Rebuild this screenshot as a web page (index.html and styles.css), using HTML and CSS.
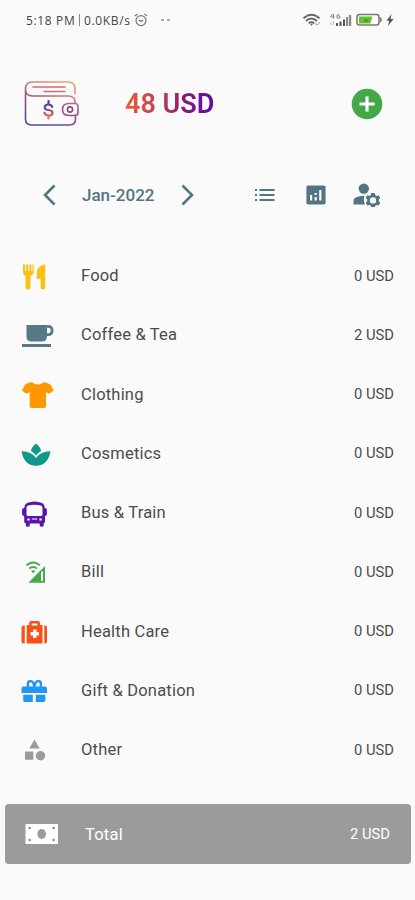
FILE: index.html
```html
<!DOCTYPE html>
<html lang="en">
<head>
<meta charset="utf-8">
<title>Expenses</title>
<link rel="stylesheet" href="styles.css">
</head>
<body>
<div class="status">
  <span class="clock">5:18 PM</span><span class="bar"></span><span class="speed">0.0KB/s</span>
  <svg class="alarm" width="14" height="14" viewBox="0 0 14 14" fill="none" stroke="#777" stroke-width="1.2"><circle cx="7" cy="7.6" r="5"/><path d="M.8 3 3.6 1M13.2 3 10.400 1M4.800 7l2.200 1.500L9.200 7"/></svg>
  <span class="dots"><i></i><i></i></span>
  <svg class="wifi" width="20" height="14" viewBox="0 0 20 14" fill="none" stroke="#666" stroke-width="1.900"><path d="M1.500 5.300Q9.500-2 17.500 5.300M4 8Q9.500 2.800 15 8M6.800 10.300Q9.500 8 12.200 10.300"/><path d="m8 11.300 1.500 1.500 1.500-1.500z" fill="#555" stroke="none"/><path d="M13 10.500l2.500 1.500 2.500-3" stroke="#999" stroke-width="1"/></svg>
  <svg class="signal" width="24" height="15" viewBox="0 0 24 15"><path d="M3.500 1 1.500 4h4M4.500 1v4.500M11 2H8v3h3V3.800H9.500" fill="none" stroke="#888"/><path d="M2 9v3M4.500 8v4" stroke="#bbb"/><path d="M7 10h2v3H7zM10.500 8.500h2V13h-2zM14 6.500h2V13h-2z" fill="#555"/><path d="M17 4h2.200v9H17zM20 2h2.200v11H20z" fill="#888"/></svg>
  <svg class="battery" width="27" height="14" viewBox="0 0 27 14"><rect x="1" y="1.500" width="22" height="10.500" rx="2.500" fill="#fff" stroke="#777" stroke-width="1.500"/><path d="M24 4.500q2 2.200 0 4.500" fill="none" stroke="#777" stroke-width="1.500"/><path d="M3 3.500h13.500l-2.200 7H3z" fill="#62c52b"/><path d="m8 9 2-3v3l2.500-3" fill="none" stroke="#438e26"/></svg>
  <svg class="bolt" width="8" height="12" viewBox="0 0 8 12"><path d="M5.500 0 .500 6.700h2.700L2 12l5.500-7H4.600z" fill="#555"/></svg>
</div>

<header class="balance">
  <svg class="wallet" width="56" height="48" viewBox="0 0 56 48" fill="none" stroke-width="1.600" stroke-linecap="round">
    <defs>
      <linearGradient id="wg" x1=".7" y1="0" x2=".3" y2="1"><stop offset="0" stop-color="#f2a07c"/><stop offset=".5" stop-color="#a8507d"/><stop offset="1" stop-color="#4a4ca3"/></linearGradient>
      <linearGradient id="dg" x1="0" y1="0" x2="0" y2="1"><stop offset=".15" stop-color="#3d469e"/><stop offset=".6" stop-color="#a75078"/><stop offset="1" stop-color="#f47b43"/></linearGradient>
    </defs>
    <path stroke="url(#wg)" d="M1.500 8v31q0 6 6 6h38q6 0 6-6v-4M51 23.500v-1.500q0-6-7-6H8.500q-7 0-7-7t7-7H44q7 0 7 7v4.500M45 23.500h6q3 0 3 3v6q0 3-3 3h-6q-6.500 0-6.500-6t6.500-6z"/>
    <path stroke="#cf6f74" d="M9 7h32M20 11.500h21"/>
    <circle cx="46" cy="29.500" r="2.600" stroke="#8b458a"/>
    <path stroke="url(#dg)" stroke-width="2.200" d="M24.500 21v3M24.500 35.500v3M28.300 27q-1-2.500-3.800-2.500-3.800 0-3.800 2.700t3.800 2.800q4 .300 4 2.900 0 2.600-4 2.600-3 0-4-2.600"/>
  </svg>
  <h1 class="amount">48 USD</h1>
  <svg class="add" width="32" height="32" viewBox="0 0 32 32"><circle cx="16" cy="16" r="15.300" fill="#43a847"/><path d="M16 8.500v15M8.500 16h15" stroke="#fff" stroke-width="3.200"/></svg>
</header>

<nav class="month">
  <svg class="prev" width="14" height="22" viewBox="0 0 14 22"><path d="M12.500 1.500 3 11l9.500 9.500"/></svg>
  <span class="month-name">Jan-2022</span>
  <svg class="next" width="14" height="22" viewBox="0 0 14 22"><path d="m1.500 1.500 9.500 9.500-9.500 9.500"/></svg>
  <svg class="tool list-icon" width="20" height="14" viewBox="0 0 20 14"><path d="M0 1h2v2H0zM4.500 1h15v2h-15zM0 6h2v2H0zM4.500 6h15v2h-15zM0 11h2v2H0zM4.500 11h15v2h-15z"/></svg>
  <svg class="tool chart-icon" width="20" height="20" viewBox="0 0 20 20"><rect x=".400" y=".400" width="19.200" height="19.200" rx="2"/><path d="M4 10h2.200v5.500H4zM8.600 12h2.200v3.500H8.600zM8.600 8h2.200v2H8.600zM13.200 5h2.200v10.500h-2.200z" fill="#fafafa"/></svg>
  <svg class="tool user-icon" width="27" height="24" viewBox="0 0 27 24"><circle cx="10.800" cy="5.600" r="5.200"/><path d="M.500 21.500V18q0-3 4-4.300 3.500-1 7-1-1.600 4.500 .500 8.800z"/><path fill-rule="evenodd" d="M18.300 10h3.400l.500 2.100 1.500.800 2-.600 1.600 2.800-1.500 1.500v1.600l1.500 1.500-1.600 2.800-2-.600-1.500.800-.500 2h-3.400l-.500-2-1.500-.800-2 .600-1.600-2.800 1.500-1.500v-1.600l-1.500-1.500 1.600-2.800 2 .600 1.500-.800zM20 14.200a3.200 3.200 0 1 0 0 6.400 3.200 3.200 0 0 0 0-6.400z"/></svg>
</nav>

<ul class="rows">
  <li class="row"><svg class="ico" viewBox="0 0 36 30" fill="#fcc010"><path d="M3 3.500h2v6.500h1.200V3.500h2v6.500h1.200V3.500h2v6.500h1V3.500h1.300V10q0 4-3.200 5v11q0 2.500-2.500 2.500T5.500 26V15Q3 14 3 10zM25.200 3.500v23q0 2-2.300 2t-2.300-2V18h-3.800v-6q0-7 8.400-8.500z"/></svg><span class="name">Food</span><span class="value">0 USD</span></li>
  <li class="row"><svg class="ico" viewBox="0 0 36 30" fill="#587988"><path fill-rule="evenodd" d="M6.500 5H28q5.500 0 5.500 5.500T28 16h-1q0 5.500-5 5.500H11.500q-5 0-5-5zM27 7.800v5.400h1q2.700 0 2.700-2.700T28 7.800z"/><path d="M2 24h29v3H2z"/></svg><span class="name">Coffee &amp; Tea</span><span class="value">2 USD</span></li>
  <li class="row"><svg class="ico" viewBox="0 0 36 30" fill="#ff9800"><path d="M12 3.300q5.700 4.500 11.500 0 5 .5 7.300 2.500L33.500 11.500l-4 3.200-3.500-1.500v14q0 1.800-1.800 1.800H11.500q-1.800 0-1.800-1.800v-14l-3.500 1.500L2 11.500 5 5.800Q7 3.800 12 3.300z"/></svg><span class="name">Clothing</span><span class="value">0 USD</span></li>
  <li class="row"><svg class="ico" viewBox="0 0 36 30" fill="#12988a"><path d="M16 5.500q5 4 5 7.500-3 1.700-5 4.500-2-2.800-5-4.500 0-3.500 5-7.500zM1.500 13.300Q11 13 16 20q5-7 14.500-6.700Q28 27.700 16 27.700T1.500 13.300z"/></svg><span class="name">Cosmetics</span><span class="value">0 USD</span></li>
  <li class="row"><svg class="ico" viewBox="0 0 36 30" fill="#5814ad"><path fill-rule="evenodd" d="M7 5q7.500-3.200 15 0 2.500 1.200 2.700 5h.3q1.900 0 1.900 2v4q0 2-1.900 2H25v5.500q0 1.500-1.300 1.700v2q0 1.600-2 1.600t-2-1.600V25.500H9.800v1.700q0 1.600-2 1.600t-2-1.600v-2Q4.200 25 4.200 23.500V18H4q-1.900 0-1.900-2v-4q0-2 1.900-2h.2Q4.500 6.200 7 5zM8 7.500Q6.500 8 6.500 10v6.500q0 1.500 1.500 1.500h13q1.500 0 1.500-1.500V10q0-2-1.500-2.500-6.500-1.600-13 0zM7.300 20.500v2h2.300v-2zM19.400 20.500v2h2.300v-2zM11.800 20.500v1h5.400v-1z"/></svg><span class="name">Bus &amp; Train</span><span class="value">0 USD</span></li>
  <li class="row"><svg class="ico" viewBox="0 0 36 30" fill="#45aa49"><path fill-rule="evenodd" d="M25 9V25.700H8.300zM21 15.500V24H23V13.500z"/><path d="M6.300 8.200q7-5.500 13.500 0M9.300 11.500q3.800-2.900 7.500 0" fill="none" stroke="#45aa49" stroke-width="2"/><path d="m11 14 2.100 2.200 2.100-2.200q-2-1.300-4.200 0z"/></svg><span class="name">Bill</span><span class="value">0 USD</span></li>
  <li class="row"><svg class="ico" viewBox="0 0 36 30" fill="#fa5018"><path fill-rule="evenodd" d="M6.700 9h2.500V7q0-2 2-2h6.800q2 0 2 2v2h2.500v18.500H6.700zM11.700 7.500V9.500h5.800V7.500zM13 13.500V16h-2.500v3.500H13V22h3.500v-2.500H19V16h-2.500v-2.500z"/><path d="M4.800 9.500v18H3.500q-2 0-2-2v-14q0-2 2-2zM24.300 9.500H25q2 0 2 2v14q0 2-2 2h-.7z"/></svg><span class="name">Health Care</span><span class="value">0 USD</span></li>
  <li class="row"><svg class="ico" viewBox="0 0 36 30" fill="#2395f3"><path fill-rule="evenodd" d="M7 11.500Q5.500 5 10.500 4.700q2.500 0 3.900 2.600 1.500-2.600 3.900-2.600 5 .3 3.500 6.800H25q2 0 2 2V18H1.500v-4.500q0-2 2-2zM9.500 11.500H13q-.5-4.300-2.500-4.300-2.500.500-1 4.300zM15.800 11.500h3.500q1.500-3.800-1-4.300-2 0-2.500 4.300z"/><path d="M3.200 19.800h9.600V27H5q-1.800 0-1.800-1.800zM15.800 19.800h9.600v5.400q0 1.800-1.800 1.800h-7.800z"/></svg><span class="name">Gift &amp; Donation</span><span class="value">0 USD</span></li>
  <li class="row"><svg class="ico" viewBox="0 0 36 30" fill="#9b9b9b"><path d="m14.500 4.500 5.200 9H9.300zM5 16.500h8.300v8.300H5z"/><circle cx="20.500" cy="20.700" r="4.700"/></svg><span class="name">Other</span><span class="value">0 USD</span></li>
</ul>

<footer class="total">
  <svg class="cash" width="34" height="22" viewBox="0 0 34 22"><rect x=".5" y="1" width="32.500" height="20" rx="1" fill="#fff"/><ellipse cx="16.700" cy="11" rx="4.300" ry="5" fill="#9b9b9b"/><g fill="#8c8c8c"><circle cx="4.700" cy="5" r="1.300"/><circle cx="28.700" cy="5" r="1.300"/><circle cx="4.700" cy="17" r="1.300"/><circle cx="28.700" cy="17" r="1.300"/></g></svg>
  <span class="name">Total</span><span class="value">2 USD</span>
</footer>
</body>
</html>
```
FILE: styles.css
```css
* { box-sizing: border-box; }
body {
  margin: 0;
  width: 415px;
  height: 900px;
  overflow: hidden;
  background: #fafafa;
  color: #4c4c4c;
  font-family: Roboto, sans-serif;
}
svg { display: block; flex: none; }
.status {
  display: flex;
  align-items: center;
  height: 40px;
  padding-left: 26px;
  font-family: "Open Sans", sans-serif;
  font-size: 12px;
  color: #444;
}
.clock { width: 50px; white-space: nowrap; letter-spacing: .65px; font-weight: 500; }
.bar { width: 1px; height: 12px; margin: 0 4px 0 3px; background: #888; }
.speed { width: 47px; white-space: nowrap; letter-spacing: .65px; }
.alarm { margin-left: 3px; }
.dots { display: flex; gap: 3px; margin-left: 13px; }
.dots i { width: 3px; height: 2px; background: #aaa; }
.wifi { margin-left: 132px; }
.signal { margin-left: 7px; }
.battery { margin-left: 3px; }
.bolt { margin-left: 3px; }

.balance {
  display: flex;
  align-items: center;
  height: 128px;
  padding: 0 32px 0 24px;
}
.amount {
  margin: 0 auto 0 45px;
  font-size: 27px;
  line-height: 32px;
  font-weight: 600;
  background: linear-gradient(90deg, #ee5c33 0%, #b93f58 40%, #8a1b77 65%, #5a0bb0 100%);
  -webkit-background-clip: text;
  background-clip: text;
  color: transparent;
}
.add { margin-right: 0; }

.month {
  display: flex;
  align-items: center;
  height: 54px;
  padding-left: 42px;
  color: #537482;
}
.prev, .next { fill: none; stroke: #537482; stroke-width: 2.600; }
.tool { fill: #537482; }
.month-name { width: 74px; margin: 0 25px 0 26px; font-size: 17px; font-weight: 500; white-space: nowrap; }
.list-icon { margin-left: 60px; }
.chart-icon { margin-left: 31px; }
.user-icon { margin-left: 27px; }

.rows { margin: 0; padding: 24px 0 0; list-style: none; }
.row {
  display: flex;
  align-items: center;
  height: 59.250px;
  padding: 0 21px 0 20px;
}
.ico { width: 36px; height: 30px; margin-right: 25px; }
.name { flex: 1; font-size: 16.500px; letter-spacing: .2px; }
.value { font-size: 14.750px; }

.total {
  display: flex;
  align-items: center;
  height: 60px;
  margin: 25px 4px 0 5px;
  padding: 0 21px 0 20px;
  border-radius: 4px;
  background: #9b9b9b;
  color: #fff;
}
.cash { margin-right: 26px; }
```
